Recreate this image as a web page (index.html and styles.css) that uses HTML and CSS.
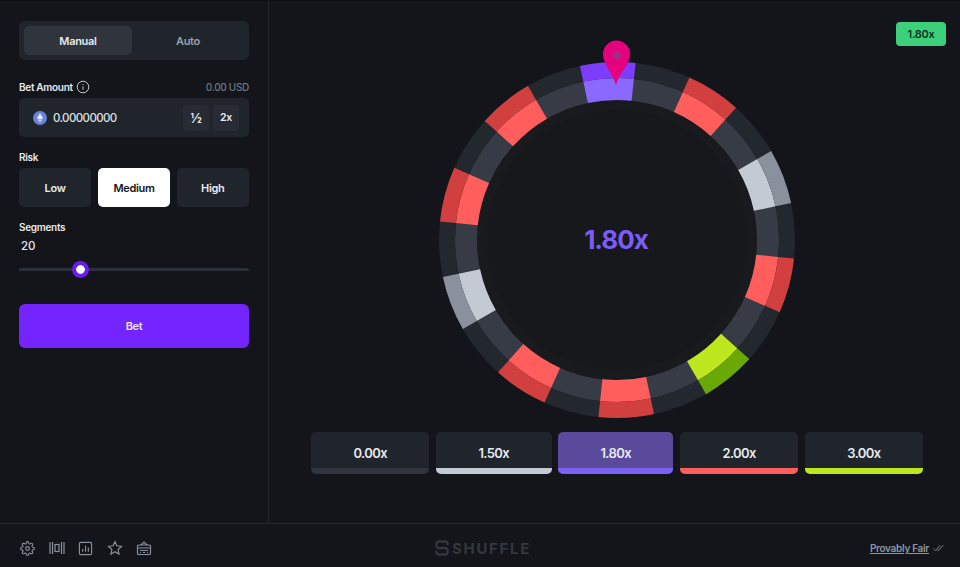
FILE: index.html
```html
<!DOCTYPE html>
<html lang="en">
<head>
  <meta charset="UTF-8" />
  <meta name="viewport" content="width=device-width, initial-scale=1.0"/>
  <title>Wheel</title>
  <link rel="stylesheet" href="styles.css">
</head>
<body>
  <div class="game">
    <aside class="sidebar">
      <div class="tabs">
        <button class="tab active">Manual</button>
        <button class="tab">Auto</button>
      </div>

      <div class="label-row amount-label">
        <span class="label">Bet Amount
          <svg class="info" viewBox="0 0 14 14" width="14" height="14">
            <circle cx="7" cy="7" r="5.8"/>
            <path d="M7 6.4v3.4M7 4.1v.9"/>
          </svg>
        </span>
        <span class="usd">0.00 USD</span>
      </div>
      <div class="amount">
        <svg class="coin" viewBox="0 0 14 14" width="14" height="14">
          <circle cx="7" cy="7" r="7" fill="#6a83d8"/>
          <path d="M7 2.2 10 7 7 8.8 4 7z" fill="#e6ebfa"/>
          <path d="M7 9.6 10 7.8 7 11.8 4 7.8z" fill="#c7d2f3"/>
        </svg>
        <span class="amount-value">0.00000000</span>
        <button class="mini half">½</button>
        <button class="mini">2x</button>
      </div>

      <div class="label risk-label">Risk</div>
      <div class="risk">
        <button class="risk-btn">Low</button>
        <button class="risk-btn selected">Medium</button>
        <button class="risk-btn">High</button>
      </div>

      <div class="label segments-label">Segments</div>
      <div class="segments-value">20</div>
      <input class="slider" type="range" min="10" max="50" step="10" value="20">

      <button class="bet">Bet</button>
    </aside>

    <main class="stage">
      <div class="last-win">1.80x</div>

      <svg class="wheel" viewBox="-190 -200 380 380" width="380" height="380">
        <circle class="disc-outer" r="140"/>
        <circle class="disc-inner" r="130"/>
        <circle class="ring-in base" r="151"/>
        <circle class="ring-out base" r="170"/>

        <g class="seg purple" transform="rotate(-102)"><circle class="ring-in" r="151" pathLength="360"/><circle class="ring-out" r="170" pathLength="360"/></g>
        <g class="seg red" transform="rotate(-66)"><circle class="ring-in" r="151" pathLength="360"/><circle class="ring-out" r="170" pathLength="360"/></g>
        <g class="seg white" transform="rotate(-30)"><circle class="ring-in" r="151" pathLength="360"/><circle class="ring-out" r="170" pathLength="360"/></g>
        <g class="seg red" transform="rotate(6)"><circle class="ring-in" r="151" pathLength="360"/><circle class="ring-out" r="170" pathLength="360"/></g>
        <g class="seg green" transform="rotate(42)"><circle class="ring-in" r="151" pathLength="360"/><circle class="ring-out" r="170" pathLength="360"/></g>
        <g class="seg red" transform="rotate(78)"><circle class="ring-in" r="151" pathLength="360"/><circle class="ring-out" r="170" pathLength="360"/></g>
        <g class="seg red" transform="rotate(114)"><circle class="ring-in" r="151" pathLength="360"/><circle class="ring-out" r="170" pathLength="360"/></g>
        <g class="seg white" transform="rotate(150)"><circle class="ring-in" r="151" pathLength="360"/><circle class="ring-out" r="170" pathLength="360"/></g>
        <g class="seg red" transform="rotate(186)"><circle class="ring-in" r="151" pathLength="360"/><circle class="ring-out" r="170" pathLength="360"/></g>
        <g class="seg red" transform="rotate(222)"><circle class="ring-in" r="151" pathLength="360"/><circle class="ring-out" r="170" pathLength="360"/></g>

        <path class="pin" d="M-1-155C-4-167-14-175-14-186A13.5 13.5 0 0 1 13-186C13-175 2-167-1-155Z"/>
        <path class="pin-mark" d="M0-190l5.500 5.500-5.500 5.500-5.500-5.500Z"/>

        <text class="multiplier" x="-1" y="9" text-anchor="middle">1.80x</text>
      </svg>

      <div class="payouts">
        <div class="payout p-grey">0.00x</div>
        <div class="payout p-white">1.50x</div>
        <div class="payout p-purple">1.80x</div>
        <div class="payout p-red">2.00x</div>
        <div class="payout p-green">3.00x</div>
      </div>
    </main>
  </div>

  <footer class="footer">
    <div class="tools">
      <svg viewBox="0 0 24 24" width="15" height="15">
        <circle cx="12" cy="12" r="3"/>
        <path d="M19.4 15a1.65 1.65 0 0 0 .33 1.82l.06.06a2 2 0 0 1 0 2.83 2 2 0 0 1-2.83 0l-.06-.06a1.65 1.65 0 0 0-1.82-.33 1.65 1.65 0 0 0-1 1.51V21a2 2 0 0 1-2 2 2 2 0 0 1-2-2v-.09A1.65 1.65 0 0 0 9 19.4a1.65 1.65 0 0 0-1.82.33l-.06.06a2 2 0 0 1-2.83 0 2 2 0 0 1 0-2.83l.06-.06a1.65 1.65 0 0 0 .33-1.82 1.65 1.65 0 0 0-1.51-1H3a2 2 0 0 1-2-2 2 2 0 0 1 2-2h.09A1.65 1.65 0 0 0 4.6 9a1.65 1.65 0 0 0-.33-1.82l-.06-.06a2 2 0 0 1 0-2.83 2 2 0 0 1 2.83 0l.06.06a1.65 1.65 0 0 0 1.82.33H9a1.65 1.65 0 0 0 1-1.51V3a2 2 0 0 1 2-2 2 2 0 0 1 2 2v.09a1.65 1.65 0 0 0 1 1.51 1.65 1.65 0 0 0 1.82-.33l.06-.06a2 2 0 0 1 2.83 0 2 2 0 0 1 0 2.83l-.06.06a1.65 1.65 0 0 0-.33 1.82V9a1.65 1.65 0 0 0 1.51 1H21a2 2 0 0 1 2 2 2 2 0 0 1-2 2h-.09a1.65 1.65 0 0 0-1.51 1z"/>
      </svg>
      <svg viewBox="0 0 16 16" width="16" height="16">
        <path d="M1 2v12M3.500 2v12M12.500 2v12M15 2v12"/>
        <rect x="6" y="4.500" width="4" height="7"/>
      </svg>
      <svg viewBox="0 0 16 16" width="15" height="15">
        <rect x="1.500" y="1.500" width="13" height="13" rx="1.500"/>
        <path d="M5 8.500v3M8 5v6.500M11 7v4.500"/>
      </svg>
      <svg viewBox="0 0 24 24" width="16" height="16">
        <path d="M12 2.500l2.900 6.200 6.800.9-5 4.700 1.300 6.700-6-3.300-6 3.300 1.300-6.700-5-4.700 6.800-.9z"/>
      </svg>
      <svg viewBox="0 0 16 16" width="16" height="16">
        <path d="M5 5l3-3 3 3"/>
        <rect x="1.500" y="5" width="13" height="9.500" rx="1"/>
        <path d="M1.500 8h13M4 10.500h8M4 12.500h1M7 12.500h2M11 12.500h1"/>
      </svg>
    </div>

    <div class="logo">
      <svg viewBox="0 0 14 16" width="14" height="16">
        <path d="M12.500 5V3L11 1.500H3L1.500 3v3.500L3 8h8l1.500 1.500V13L11 14.500H3L1.500 13v-2"/>
      </svg>
      <span>SHUFFLE</span>
    </div>

    <div class="fair">
      <a href="#">Provably Fair</a>
      <svg viewBox="0 0 14 8" width="13" height="8">
        <path d="M.5 4.500l2.500 2.500 4.500-6M5 6.500l.5.500L11 1"/>
      </svg>
    </div>
  </footer>
</body>
</html>
```

FILE: styles.css
```css
* {
  box-sizing: border-box;
}
body {
  font-family: Inter, "Liberation Sans", sans-serif;
  margin: 0;
  height: 567px;
  overflow: hidden;
  background-color: #13151a;
  color: #e8eaed;
  font-size: 11px;
  font-weight: 600;
  letter-spacing: -0.3px;
}
button {
  font-family: inherit;
  font-size: inherit;
  font-weight: inherit;
  letter-spacing: inherit;
  color: inherit;
  border: 0;
  padding: 0;
}
.game {
  display: flex;
  height: 523px;
  box-shadow: inset 0 1px 0 #0d0e11;
}

/* left panel */
.sidebar {
  flex: none;
  width: 269px;
  padding: 21px 19px 0;
  border-right: 1px solid #23262c;
}
.tabs {
  display: flex;
  height: 39px;
  padding: 5px;
  background: #20242b;
  border-radius: 6px;
}
.tab {
  flex: 1;
  background: none;
  color: #9aa0aa;
  border-radius: 5px;
}
.tab.active {
  flex: 0 0 108px;
  background: #2f343d;
  color: #e8eaed;
}
.label-row {
  display: flex;
  justify-content: space-between;
  align-items: center;
}
.amount-label {
  margin-top: 20px;
  height: 14px;
}
.label {
  display: flex;
  align-items: center;
  gap: 3px;
  height: 14px;
  font-size: 10px;
}
.info {
  fill: none;
  stroke: #c4c8ce;
  stroke-width: 1;
}
.usd {
  color: #6f7680;
  font-size: 10px;
  font-weight: 500;
  letter-spacing: -0.3px;
}
.amount {
  display: flex;
  align-items: center;
  height: 39px;
  margin-top: 4px;
  padding: 0 10px 0 14px;
  background: #20242b;
  border-radius: 5px;
}
.amount-value {
  flex: 1;
  margin-left: 6px;
  font-size: 11.5px;
  font-weight: 500;
  letter-spacing: -0.6px;
  color: #dfe1e5;
}
.mini {
  width: 26px;
  height: 26px;
  margin-left: 4px;
  background: #272b33;
  border-radius: 4px;
  font-size: 10.5px;
}
.mini.half {
  font-size: 13px;
}
.risk-label {
  margin-top: 13px;
}
.risk {
  display: flex;
  gap: 6.5px;
  margin-top: 4px;
}
.risk-btn {
  flex: 1;
  height: 39px;
  background: #20242b;
  border-radius: 5px;
}
.risk-btn.selected {
  background: #fff;
  color: #14161a;
}
.segments-label {
  margin-top: 13px;
}
.segments-value {
  margin: 5px 0 0 2px;
  height: 14px;
  line-height: 14px;
  font-size: 11.5px;
  font-weight: 500;
  letter-spacing: 0;
}
.slider {
  display: block;
  appearance: none;
  -webkit-appearance: none;
  width: 100%;
  height: 17px;
  margin: 8px 0 0;
  background: transparent;
}
.slider::-webkit-slider-runnable-track {
  height: 3px;
  background: #2b2f37;
  border-radius: 2px;
}
.slider::-webkit-slider-thumb {
  -webkit-appearance: none;
  width: 17px;
  height: 17px;
  margin-top: -7px;
  border-radius: 50%;
  background: radial-gradient(circle, #fff 0 4px, #6a1cf0 4.6px);
}
.bet {
  display: block;
  width: 100%;
  height: 44px;
  margin-top: 26px;
  background: #7424ff;
  border-radius: 6px;
}

/* game area */
.stage {
  position: relative;
  flex: 1;
  min-width: 0;
  display: flex;
  flex-direction: column;
  align-items: center;
  padding: 40px 37px 0 42px;
}
.last-win {
  position: absolute;
  top: 22px;
  right: 14px;
  width: 50px;
  height: 24px;
  line-height: 24px;
  text-align: center;
  background: #3dd07a;
  color: #10301f;
  border-radius: 4px;
}
.wheel {
  display: block;
  flex: none;
}
.disc-outer {
  fill: #181a1e;
}
.disc-inner {
  fill: #16181c;
}
.wheel circle.ring-in,
.wheel circle.ring-out {
  fill: none;
}
.ring-in {
  stroke-width: 22;
}
.ring-out {
  stroke-width: 16;
}
.base.ring-in {
  stroke: #363b45;
}
.base.ring-out {
  stroke: #23272e;
}
.seg circle {
  stroke-dasharray: 18 342;
}
.purple .ring-in { stroke: #8b69ff; }
.purple .ring-out { stroke: #7c3dff; }
.red .ring-in { stroke: #ff5e5c; }
.red .ring-out { stroke: #d1403f; }
.white .ring-in { stroke: #c3cad3; }
.white .ring-out { stroke: #8a919c; }
.green .ring-in { stroke: #bde81e; }
.green .ring-out { stroke: #6aa806; }
.pin {
  fill: #e6007e;
}
.pin-mark {
  fill: #a82a86;
}
.multiplier {
  font-size: 26px;
  font-weight: 700;
  letter-spacing: -1px;
  fill: #7c5cf5;
}
.payouts {
  display: flex;
  gap: 6.5px;
  width: 100%;
  margin-top: 12px;
}
.payout {
  flex: 1 1 auto;
  height: 42px;
  padding: 6px 30px 0;
  display: flex;
  align-items: center;
  justify-content: center;
  font-size: 13px;
  letter-spacing: -0.6px;
  background: #20242b;
  border-radius: 5px;
  border-bottom: 6px solid;
}
.p-grey { border-bottom-color: #30343c; }
.p-white { border-bottom-color: #c3cad3; }
.p-purple { border-bottom-color: #7b61f2; background: #5a4a9c; }
.p-red { border-bottom-color: #ff5e5c; }
.p-green { border-bottom-color: #bde81e; }

/* bottom bar */
.footer {
  display: flex;
  align-items: center;
  height: 44px;
  padding: 5px 14px 0 20px;
  border-top: 1px solid #26292f;
}
.tools {
  display: flex;
  align-items: center;
  gap: 13.5px;
}
.tools svg {
  fill: none;
  stroke: #8b919b;
  stroke-width: 1.2;
}
.tools svg:first-child,
.tools svg:nth-child(4) {
  stroke-width: 1.8;
}
.logo {
  display: flex;
  align-items: center;
  gap: 3px;
  margin-left: 283px;
  color: #33373e;
  font-size: 15px;
  font-weight: 700;
  letter-spacing: 1.7px;
}
.logo svg {
  fill: none;
  stroke: #33373e;
  stroke-width: 2.4;
}
.fair {
  display: flex;
  align-items: center;
  gap: 4px;
  margin-left: auto;
}
.fair a {
  color: #8e96a3;
  font-size: 10px;
}
.fair svg {
  fill: none;
  stroke: #7f8691;
  stroke-width: 1;
}
```
